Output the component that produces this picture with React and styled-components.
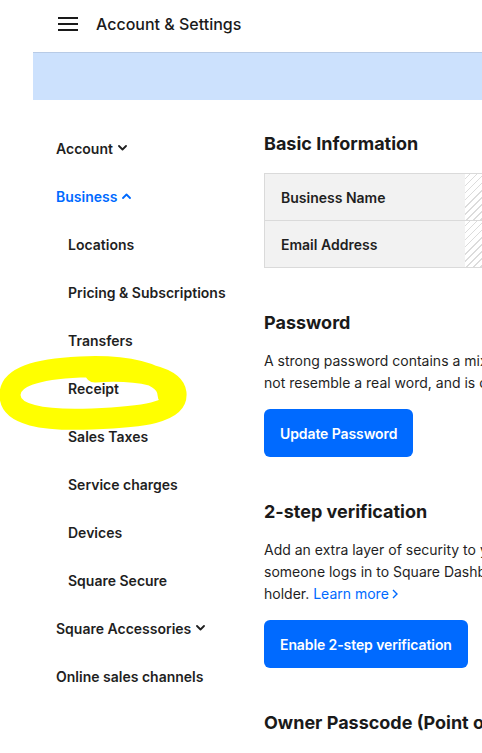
import React from "react";
import styled, { createGlobalStyle } from "styled-components";

const Global = createGlobalStyle`
  html, body { margin: 0; padding: 0; background: #fff; overflow: hidden; }
  body { font-family: Inter, "Noto Sans", Arial, sans-serif; color: #1a1a1a; -webkit-font-smoothing: antialiased; }
`;

const Page = styled.div`
  position: relative;
  width: 482px;
  height: 753px;
  overflow: hidden;
`;

const Header = styled.header`
  box-sizing: border-box;
  display: flex;
  align-items: center;
  gap: 18px;
  height: 52px;
  padding: 0 0 4px 58px;
`;

const Title = styled.h1`
  margin: 0;
  font-size: 16px;
  font-weight: 500;
  color: #1a1a1a;
`;

const Body = styled.div`
  margin-left: 33px;
`;

const Banner = styled.div`
  height: 48px;
  background: #cce1fd;
  box-shadow: inset 0 1px 0 #b8cbe6;
`;

const Columns = styled.div`
  display: grid;
  grid-template-columns: 231px 600px;
`;

const Side = styled.nav`
  display: flex;
  flex-direction: column;
  padding: 24px 0 0 23px;
`;

const NavItem = styled.div`
  height: 48px;
  display: flex;
  align-items: center;
  gap: 5px;
  padding-left: ${(p) => (p.$sub ? 12 : 0)}px;
  font-size: 14px;
  font-weight: 600;
  color: ${(p) => (p.$active ? "#006aff" : "#1f1f1f")};
  white-space: nowrap;
`;

const Main = styled.main`
  padding-top: 32px;
  display: flex;
  flex-direction: column;
`;

const H2 = styled.h2`
  margin: ${(p) => (p.$first ? 0 : "43px")} 0 0;
  font-size: 18px;
  line-height: 24px;
  font-weight: 700;
  color: #1a1a1a;
  white-space: nowrap;
`;

const Table = styled.div`
  margin-top: 17px;
  width: 420px;
  border: 1px solid #dadada;
`;

const Row = styled.div`
  display: grid;
  grid-template-columns: 200px 1fr;
  height: 46px;
  border-top: ${(p) => (p.$first ? "none" : "1px solid #dadada")};
`;

const Label = styled.div`
  display: flex;
  align-items: center;
  padding-left: 16px;
  background: #f2f2f2;
  font-size: 14px;
  font-weight: 600;
  color: #1f1f1f;
`;

const Hatch = styled.div`
  background: repeating-linear-gradient(
    -45deg,
    #ffffff 0px,
    #ffffff 4px,
    #dcdcdc 4px,
    #dcdcdc 5px
  );
`;

const Para = styled.p`
  margin: 15px 0 0;
  font-size: 14px;
  line-height: 22px;
  color: #1f1f1f;
  white-space: nowrap;
`;

const Link = styled.a`
  color: #006aff;
  text-decoration: none;
  display: inline-flex;
  align-items: center;
  gap: 3px;
`;

const Button = styled.button`
  align-self: flex-start;
  margin-top: 15px;
  height: 48px;
  padding: 0 16px;
  border: none;
  border-radius: 6px;
  background: #006aff;
  color: #fff;
  font-family: inherit;
  font-size: 14px;
  font-weight: 600;
  letter-spacing: -0.1px;
`;

const Scribble = styled.svg`
  position: absolute;
  left: 0;
  top: 355px;
  pointer-events: none;
`;

const Chevron = ({ up }) => (
  <svg width="9" height="6" viewBox="0 0 9 6">
    <polyline
      points={up ? "1,5 4.5,1.5 8,5" : "1,1 4.5,4.5 8,1"}
      fill="none"
      stroke="currentColor"
      strokeWidth="1.8"
      strokeLinecap="round"
      strokeLinejoin="round"
    />
  </svg>
);

const Hamburger = () => (
  <svg width="20" height="14" viewBox="0 0 20 14">
    <rect x="0" y="0" width="20" height="2" fill="#1a1a1a" />
    <rect x="0" y="6" width="20" height="2" fill="#1a1a1a" />
    <rect x="0" y="12" width="20" height="2" fill="#1a1a1a" />
  </svg>
);

const nav = [
  { t: "Account", chev: "down" },
  { t: "Business", chev: "up", active: true },
  { t: "Locations", sub: true },
  { t: "Pricing & Subscriptions", sub: true },
  { t: "Transfers", sub: true },
  { t: "Receipt", sub: true },
  { t: "Sales Taxes", sub: true },
  { t: "Service charges", sub: true },
  { t: "Devices", sub: true },
  { t: "Square Secure", sub: true },
  { t: "Square Accessories", chev: "down" },
  { t: "Online sales channels" },
];

export default function App() {
  return (
    <Page>
      <Global />
      <Header>
        <Hamburger />
        <Title>Account &amp; Settings</Title>
      </Header>
      <Body>
        <Banner />
        <Columns>
          <Side>
            {nav.map((n) => (
              <NavItem key={n.t} $sub={n.sub} $active={n.active}>
                {n.t}
                {n.chev && <Chevron up={n.chev === "up"} />}
              </NavItem>
            ))}
          </Side>
          <Main>
            <H2 $first>Basic Information</H2>
            <Table>
              <Row $first>
                <Label>Business Name</Label>
                <Hatch />
              </Row>
              <Row>
                <Label>Email Address</Label>
                <Hatch />
              </Row>
            </Table>
            <H2>Password</H2>
            <Para>
              A strong password contains a mix of numbers, letters, and symbols. It is hard to guess, does
              <br />
              not resemble a real word, and is only used for this account.
            </Para>
            <Button>Update Password</Button>
            <H2>2-step verification</H2>
            <Para>
              Add an extra layer of security to your account by requiring a verification code whenever
              <br />
              someone logs in to Square Dashboard from a new device. The code is sent to the account
              <br />
              holder.{" "}
              <Link href="#">
                Learn more
                <svg width="6" height="10" viewBox="0 0 6 10">
                  <polyline points="1,1 5,5 1,9" fill="none" stroke="currentColor" strokeWidth="1.4" />
                </svg>
              </Link>
            </Para>
            <Button>Enable 2-step verification</Button>
            <H2>Owner Passcode (Point of Sale)</H2>
          </Main>
        </Columns>
      </Body>
      <Scribble width="190" height="80" viewBox="0 0 190 80">
        <path
          d="M168 40 C 168 16, 120 10, 80 12 C 36 14, 10 22, 10 40 C 10 60, 42 66, 92 64 C 142 62, 178 58, 176 38 C 174 22, 140 14, 95 17"
          fill="none"
          stroke="#ffff00"
          strokeWidth="21"
          strokeLinecap="round"
        />
      </Scribble>
    </Page>
  );
}
